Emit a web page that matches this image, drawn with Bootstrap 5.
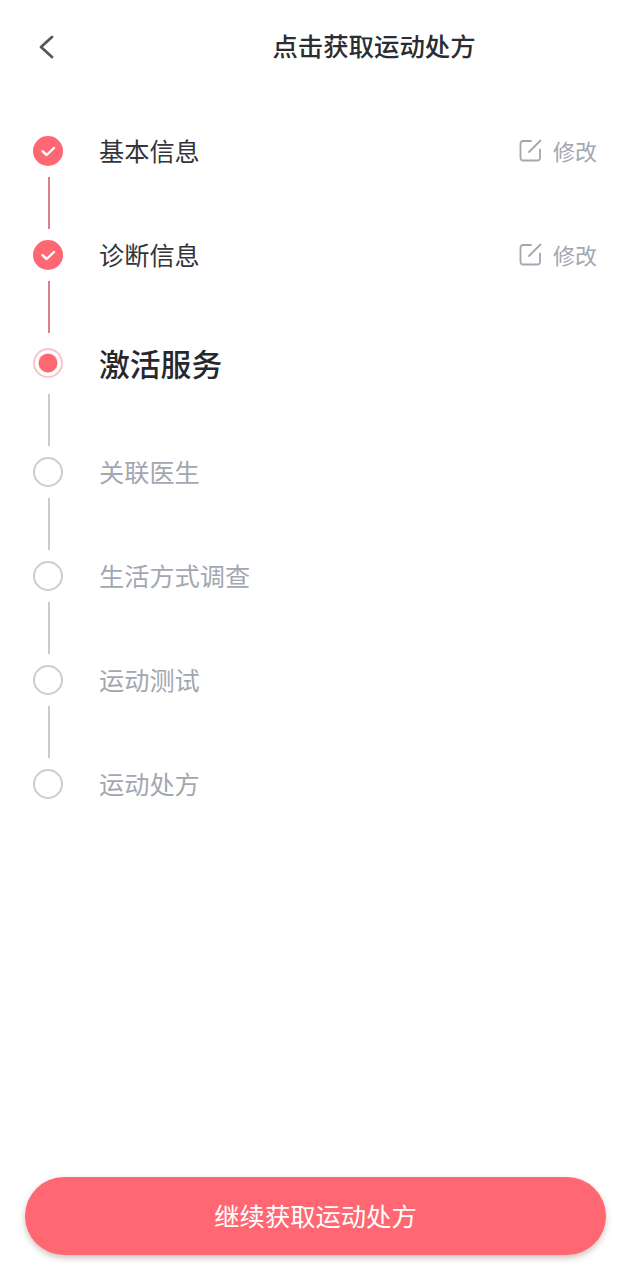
<!doctype html>
<html lang="zh">
<head>
<meta charset="utf-8">
<title>点击获取运动处方</title>
<link rel="stylesheet" href="https://cdn.jsdelivr.net/npm/bootstrap@5.3.0/dist/css/bootstrap.min.css">
<style>
html,body{background:#fff;font-family:"Noto Sans CJK SC","Noto Sans",sans-serif;}
.app-page{height:1280px;width:630px;overflow:hidden;}
.top-bar{height:94px;padding-left:34px;}
.back-icon{width:24px;height:28px;display:block;}
.top-title{font-size:25.4px;font-weight:500;color:#2b2d33;line-height:1;left:0;right:0;top:33px;padding-left:118px;}
.step-list{padding:42px 33px 0 33px;}
.step-row{height:30px;}
.step-row.is-active{margin-top:15px;}
.node-cell{width:30px;height:30px;flex:none;}
.node-cell svg{display:block;width:30px;height:30px;}
.step-label{margin-left:36px;margin-bottom:2px;font-size:25.2px;line-height:30px;color:#a3a7b1;}
.step-row.is-done .step-label{color:#33353b;}
.step-row.is-active .step-label{font-size:30.8px;font-weight:500;color:#26282d;margin-bottom:0;}
.edit-link{color:#a3a7b1;font-size:22px;line-height:30px;gap:11px;margin-bottom:2px;}
.edit-link svg{width:23px;height:23px;display:block;}
.step-wire{width:2px;height:52px;margin:11px 0 11px 14.5px;background:#c9cdd3;}
.step-wire.is-done{background:#dc7f8c;}
.step-wire.after-active{margin-top:16px;}
.step-wire.before-active{margin-bottom:0;}
.cta-btn{margin:0 24px 25px 25px;height:78px;border:0;border-radius:39px;background:#ff6773;color:#fff;font-size:25.3px;box-shadow:0 3px 6px rgba(120,80,80,.35);}
.cta-btn:hover,.cta-btn:active{background:#ff6773!important;color:#fff!important;}
</style>
</head>
<body>
<div class="app-page d-flex flex-column position-relative">
  <header class="top-bar d-flex align-items-center position-relative">
    <svg class="back-icon" viewBox="0 0 24 28" fill="none" stroke="#55575c" stroke-width="2.8" stroke-linecap="round" stroke-linejoin="round"><path d="M18 4 L7 14 L18 24"/></svg>
    <div class="top-title position-absolute text-center">点击获取运动处方</div>
  </header>

  <div class="step-list flex-grow-1">
    <div class="step-row is-done d-flex align-items-center">
      <div class="node-cell"><svg viewBox="0 0 30 30"><circle cx="15" cy="15" r="15" fill="#ff6773"/><path d="M9.500 15.200 L13.600 19 L21 12" fill="none" stroke="#fff" stroke-width="2.400" stroke-linecap="round" stroke-linejoin="round"/></svg></div>
      <div class="step-label">基本信息</div>
      <div class="edit-link ms-auto d-flex align-items-center">
        <svg viewBox="0 0 23 23" fill="none" stroke="#a3a7b1" stroke-width="1.800" stroke-linecap="round" stroke-linejoin="round"><path d="M12 2 H4 A2.500 2.500 0 0 0 1.500 4.500 V19 A2.500 2.500 0 0 0 4 21.500 H18.500 A2.500 2.500 0 0 0 21 19 V10.500"/><path d="M21.500 1.500 L10 13"/></svg>
        <span>修改</span>
      </div>
    </div>
    <div class="step-wire is-done"></div>
    <div class="step-row is-done d-flex align-items-center">
      <div class="node-cell"><svg viewBox="0 0 30 30"><circle cx="15" cy="15" r="15" fill="#ff6773"/><path d="M9.500 15.200 L13.600 19 L21 12" fill="none" stroke="#fff" stroke-width="2.400" stroke-linecap="round" stroke-linejoin="round"/></svg></div>
      <div class="step-label">诊断信息</div>
      <div class="edit-link ms-auto d-flex align-items-center">
        <svg viewBox="0 0 23 23" fill="none" stroke="#a3a7b1" stroke-width="1.800" stroke-linecap="round" stroke-linejoin="round"><path d="M12 2 H4 A2.500 2.500 0 0 0 1.500 4.500 V19 A2.500 2.500 0 0 0 4 21.500 H18.500 A2.500 2.500 0 0 0 21 19 V10.500"/><path d="M21.500 1.500 L10 13"/></svg>
        <span>修改</span>
      </div>
    </div>
    <div class="step-wire is-done before-active"></div>
    <div class="step-row is-active d-flex align-items-center">
      <div class="node-cell"><svg viewBox="0 0 30 30"><circle cx="15" cy="15" r="14" fill="#fff" stroke="#fbc2c8" stroke-width="2"/><circle cx="15" cy="15" r="9.500" fill="#ff6773"/></svg></div>
      <div class="step-label">激活服务</div>
    </div>
    <div class="step-wire after-active"></div>
    <div class="step-row d-flex align-items-center">
      <div class="node-cell"><svg viewBox="0 0 30 30"><circle cx="15" cy="15" r="14" fill="#fff" stroke="#c9cdd3" stroke-width="2"/></svg></div>
      <div class="step-label">关联医生</div>
    </div>
    <div class="step-wire"></div>
    <div class="step-row d-flex align-items-center">
      <div class="node-cell"><svg viewBox="0 0 30 30"><circle cx="15" cy="15" r="14" fill="#fff" stroke="#c9cdd3" stroke-width="2"/></svg></div>
      <div class="step-label">生活方式调查</div>
    </div>
    <div class="step-wire"></div>
    <div class="step-row d-flex align-items-center">
      <div class="node-cell"><svg viewBox="0 0 30 30"><circle cx="15" cy="15" r="14" fill="#fff" stroke="#c9cdd3" stroke-width="2"/></svg></div>
      <div class="step-label">运动测试</div>
    </div>
    <div class="step-wire"></div>
    <div class="step-row d-flex align-items-center">
      <div class="node-cell"><svg viewBox="0 0 30 30"><circle cx="15" cy="15" r="14" fill="#fff" stroke="#c9cdd3" stroke-width="2"/></svg></div>
      <div class="step-label">运动处方</div>
    </div>
  </div>

  <button type="button" class="btn cta-btn">继续获取运动处方</button>
</div>
<script src="https://cdn.jsdelivr.net/npm/bootstrap@5.3.0/dist/js/bootstrap.bundle.min.js"></script>
</body>
</html>
